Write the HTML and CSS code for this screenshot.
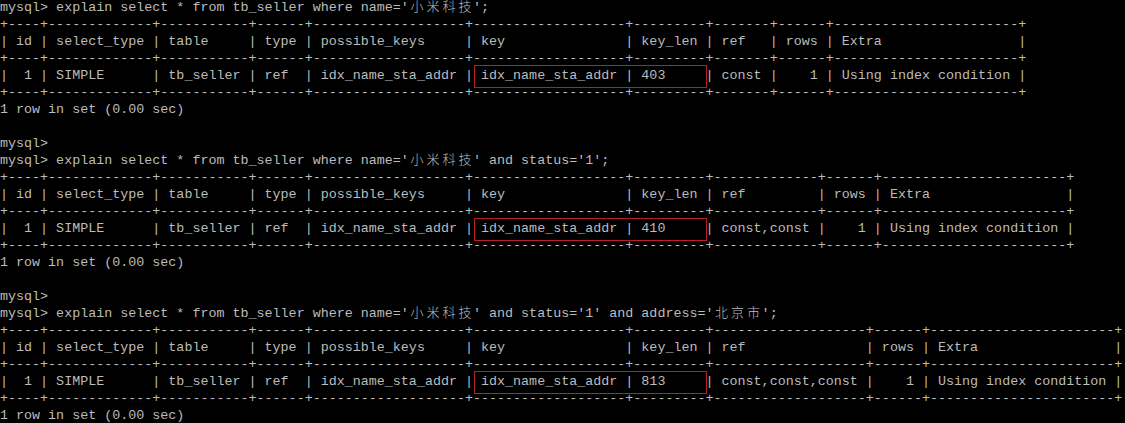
FILE: index.html
```html
<!DOCTYPE html>
<html lang="zh-CN">
<head>
<meta charset="utf-8">
<title>mysql explain</title>
<link rel="stylesheet" href="styles.css">
</head>
<body>
<pre class="term">mysql&gt; explain select * from tb_seller where name='<span class="cjk">小</span><span class="cjk">米</span><span class="cjk">科</span><span class="cjk">技</span>';
+----+-------------+-----------+------+-------------------+-------------------+---------+-------+------+-----------------------+
| id | select_type | table     | type | possible_keys     | key               | key_len | ref   | rows | Extra                 |
+----+-------------+-----------+------+-------------------+-------------------+---------+-------+------+-----------------------+
|  1 | SIMPLE      | tb_seller | ref  | idx_name_sta_addr |<span class="hl"> idx_name_sta_addr | 403     </span>| const |    1 | Using index condition |
+----+-------------+-----------+------+-------------------+-------------------+---------+-------+------+-----------------------+
1 row in set (0.00 sec)

mysql&gt;
mysql&gt; explain select * from tb_seller where name='<span class="cjk">小</span><span class="cjk">米</span><span class="cjk">科</span><span class="cjk">技</span>' and status='1';
+----+-------------+-----------+------+-------------------+-------------------+---------+-------------+------+-----------------------+
| id | select_type | table     | type | possible_keys     | key               | key_len | ref         | rows | Extra                 |
+----+-------------+-----------+------+-------------------+-------------------+---------+-------------+------+-----------------------+
|  1 | SIMPLE      | tb_seller | ref  | idx_name_sta_addr |<span class="hl"> idx_name_sta_addr | 410     </span>| const,const |    1 | Using index condition |
+----+-------------+-----------+------+-------------------+-------------------+---------+-------------+------+-----------------------+
1 row in set (0.00 sec)

mysql&gt;
mysql&gt; explain select * from tb_seller where name='<span class="cjk">小</span><span class="cjk">米</span><span class="cjk">科</span><span class="cjk">技</span>' and status='1' and address='<span class="cjk">北</span><span class="cjk">京</span><span class="cjk">市</span>';
+----+-------------+-----------+------+-------------------+-------------------+---------+-------------------+------+-----------------------+
| id | select_type | table     | type | possible_keys     | key               | key_len | ref               | rows | Extra                 |
+----+-------------+-----------+------+-------------------+-------------------+---------+-------------------+------+-----------------------+
|  1 | SIMPLE      | tb_seller | ref  | idx_name_sta_addr |<span class="hl"> idx_name_sta_addr | 813     </span>| const,const,const |    1 | Using index condition |
+----+-------------+-----------+------+-------------------+-------------------+---------+-------------------+------+-----------------------+
1 row in set (0.00 sec)
</pre>
</body>
</html>
```
FILE: styles.css
```css
html, body {
  margin: 0;
  padding: 0;
  background: #000;
}

body {
  width: 1125px;
  height: 423px;
  overflow: hidden;
}

.term {
  margin: -1.5px 0 0 0;
  padding: 0;
  color: #bcbcbc;
  font-family: "Liberation Mono", "DejaVu Sans Mono", monospace;
  font-size: 13.37px;
  line-height: 17px;
  white-space: pre;
}

.cjk {
  display: inline-block;
  width: 16.04px;
  text-align: center;
  font-family: "Noto Sans CJK SC", sans-serif;
  font-size: 13px;
  font-weight: 300;
  line-height: 13px;
  vertical-align: baseline;
}

.hl {
  position: relative;
}

.hl::after {
  content: "";
  position: absolute;
  left: 1px;
  right: -1px;
  top: -3px;
  bottom: -5px;
  border: 1px solid #b81e28;
}
```
